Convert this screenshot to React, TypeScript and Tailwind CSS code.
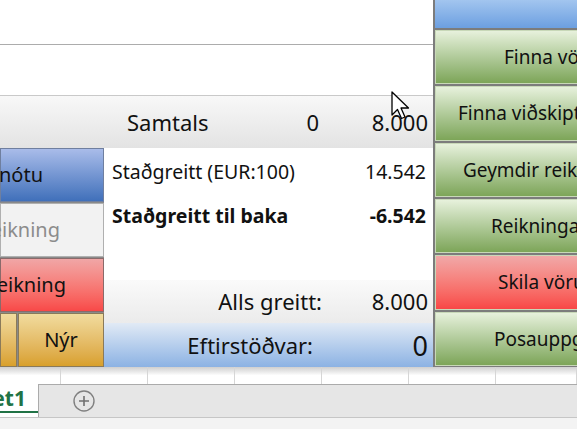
const rightButtons = [
  { label: 'Finna vörur', pad: 'pl-[68px]', tone: 'green' },
  { label: 'Finna viðskiptavini', pad: 'pl-[22px]', tone: 'green' },
  { label: 'Geymdir reikningar', pad: 'pl-[27px]', tone: 'green' },
  { label: 'Reikningar', pad: 'pl-[55px]', tone: 'green' },
  { label: 'Skila vöru', pad: 'pl-[62px]', tone: 'red' },
  { label: 'Posauppgjör', pad: 'pl-[58px]', tone: 'green' },
];

const toneClass: Record<string, string> = {
  green: 'bg-gradient-to-b from-[#e7f1dc] to-[#7da558]',
  red: 'bg-gradient-to-b from-[#f0a8a8] to-[#f84646]',
};

function Cursor() {
  return (
    <svg className="absolute left-[391px] top-[91px]" width="22" height="30" viewBox="0 0 22 30">
      <path d="M1 1 L1 24 L6.5 18.5 L10.5 27.5 L14 26 L10 17 L17.5 17 Z" fill="#fff" stroke="#000" strokeWidth="1.3" strokeLinejoin="round" />
    </svg>
  );
}

export default function App() {
  return (
    <div className="relative h-[429px] w-[577px] overflow-hidden bg-white font-['Noto_Sans','Liberation_Sans',sans-serif] text-[#111]">
      <div className="flex h-[367px]">
        <div className="flex w-[433px] shrink-0 flex-col">
          <div className="h-[45px] border-b border-[#acacac]" />
          <div className="h-[51px] border-b border-[#c9c9c9]" />
          <div className="flex h-[52px] items-center bg-gradient-to-b from-[#f8f8f8] to-[#e3e3e3] text-[22px]">
            <span className="w-[240px] pl-[127px]">Samtals</span>
            <span className="w-[79px] text-right">0</span>
            <span className="flex-1 pr-[5px] text-right">8.000</span>
          </div>
          <div className="flex flex-1">
            <div className="flex w-[104px] shrink-0 flex-col gap-[1px] overflow-hidden bg-[#8a8a8a] text-[20px]">
              <div className="flex h-[54px] items-center justify-end whitespace-nowrap border border-[#6f7f9f] bg-gradient-to-b from-[#a9bce9] to-[#4070ba] pr-[60px]">
                Prenta nótu
              </div>
              <div className="flex h-[54px] items-center justify-end whitespace-nowrap border border-[#b0b0b0] bg-[#f2f2f2] pr-[43px] text-[#8c8c8c]">
                Vista reikning
              </div>
              <div className="flex h-[54px] items-center justify-end whitespace-nowrap border border-[#8a6a6a] bg-gradient-to-b from-[#f0a6a6] to-[#f84848] pr-[37px]">
                Eyða reikning
              </div>
              <div className="flex h-[54px] gap-[1px]">
                <div className="w-[17px] shrink-0 border border-[#8a7a5a] bg-gradient-to-b from-[#f1dc9e] to-[#d9a02a]" />
                <div className="flex flex-1 items-center justify-center border border-[#8a7a5a] bg-gradient-to-b from-[#f1dc9e] to-[#d9a02a]">
                  Nýr
                </div>
              </div>
            </div>
            <div className="flex flex-1 flex-col">
              <div className="flex flex-1 flex-col bg-white pt-[2px] text-[19.5px]">
                <div className="flex h-[44px] items-center pl-[8px] pr-[7px]">
                  <span className="flex-1">Staðgreitt (EUR:100)</span>
                  <span>14.542</span>
                </div>
                <div className="flex h-[44px] items-center pl-[8px] pr-[7px] font-bold">
                  <span className="flex-1">Staðgreitt til baka</span>
                  <span>-6.542</span>
                </div>
              </div>
              <div className="flex h-[43px] items-center bg-gradient-to-b from-[#fafafa] to-[#ebebeb] text-[22px]">
                <span className="w-[218px] text-right">Alls greitt:</span>
                <span className="flex-1 pr-[5px] text-right">8.000</span>
              </div>
              <div className="flex h-[44px] items-center bg-gradient-to-b from-[#e1eaf5] to-[#8cb2e3] text-[22px]">
                <span className="w-[209px] text-right">Eftirstöðvar:</span>
                <span className="flex-1 pr-[5px] text-right text-[27px] leading-none">0</span>
              </div>
            </div>
          </div>
        </div>
        <div className="flex w-[212px] shrink-0 flex-col gap-[2px] bg-[#7c7c7c] pb-[1px] pl-[2px]">
          <div className="h-[28px] shrink-0 bg-gradient-to-b from-[#a2c5ef] to-[#6c9fe0]" />
          {rightButtons.map((b) => (
            <div
              key={b.label}
              className={`flex flex-1 items-center whitespace-nowrap border border-[#c8d8b8] text-[19px] ${b.pad} ${toneClass[b.tone]}`}
            >
              {b.label}
            </div>
          ))}
        </div>
      </div>

      <div className="grid h-[17px] grid-cols-[61px_87px_87px_87px_87px_87px_1fr] bg-gradient-to-b from-[#cfcfcf] via-white to-white">
        {Array.from({ length: 7 }).map((_, i) => (
          <div key={i} className="border-r border-[#d6d6d6]" />
        ))}
      </div>

      <div className="flex h-[34px] border-b border-[#c6c6c6] bg-[#e6e6e6]">
        <div className="relative flex w-[39px] shrink-0 items-center justify-end overflow-hidden whitespace-nowrap border-r border-[#ababab] bg-white pb-[3px] pr-[12px] text-[21px] font-bold text-[#217346]">
          Sheet1
          <div className="absolute bottom-[4px] left-0 h-[2px] w-full bg-[#217346]" />
        </div>
        <div className="flex flex-1 items-center border-t border-[#ababab] pl-[34px]">
          <svg width="22" height="22" viewBox="0 0 22 22">
            <circle cx="11" cy="11" r="10" fill="none" stroke="#808080" strokeWidth="1.4" />
            <path d="M11 6 V16 M6 11 H16" stroke="#707070" strokeWidth="1.6" />
          </svg>
        </div>
      </div>
      <div className="h-[11px] bg-[#f3f3f3]" />

      <Cursor />
    </div>
  );
}
